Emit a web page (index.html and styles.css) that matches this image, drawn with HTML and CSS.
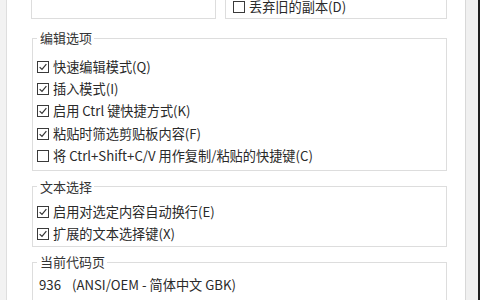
FILE: index.html
```html
<!DOCTYPE html>
<html lang="zh-CN">
<head>
<meta charset="utf-8">
<link rel="stylesheet" href="styles.css">
</head>
<body>
<div class="window">
  <div class="edge"></div>
  <main class="content">
    <div class="toprow">
      <div class="box box-left"></div>
      <div class="box box-right">
        <div class="item"><span class="cb"></span><span>丢弃旧的副本(D)</span></div>
      </div>
    </div>

    <fieldset class="group g-edit">
      <legend>编辑选项</legend>
      <div class="item"><span class="cb"><svg viewBox="0 0 11 11"><polyline points="1.8,5.6 4.4,8.2 9.2,2.4"/></svg></span><span>快速编辑模式(Q)</span></div>
      <div class="item"><span class="cb"><svg viewBox="0 0 11 11"><polyline points="1.8,5.6 4.4,8.2 9.2,2.4"/></svg></span><span>插入模式(I)</span></div>
      <div class="item"><span class="cb"><svg viewBox="0 0 11 11"><polyline points="1.8,5.6 4.4,8.2 9.2,2.4"/></svg></span><span>启用 Ctrl 键快捷方式(K)</span></div>
      <div class="item"><span class="cb"><svg viewBox="0 0 11 11"><polyline points="1.8,5.6 4.4,8.2 9.2,2.4"/></svg></span><span>粘贴时筛选剪贴板内容(F)</span></div>
      <div class="item"><span class="cb"></span><span>将 Ctrl+Shift+C/V 用作复制/粘贴的快捷键(C)</span></div>
    </fieldset>

    <fieldset class="group g-select">
      <legend>文本选择</legend>
      <div class="item"><span class="cb"><svg viewBox="0 0 11 11"><polyline points="1.8,5.6 4.4,8.2 9.2,2.4"/></svg></span><span>启用对选定内容自动换行(E)</span></div>
      <div class="item"><span class="cb"><svg viewBox="0 0 11 11"><polyline points="1.8,5.6 4.4,8.2 9.2,2.4"/></svg></span><span>扩展的文本选择键(X)</span></div>
    </fieldset>

    <fieldset class="group g-code">
      <legend>当前代码页</legend>
      <div class="codepage"><span class="num">936</span><span>(ANSI/OEM - 简体中文 GBK)</span></div>
    </fieldset>
  </main>
  <div class="scrollbar"></div>
</div>
</body>
</html>
```

FILE: styles.css
```css
html, body {
  margin: 0;
  padding: 0;
  background: #ffffff;
}

body {
  width: 480px;
  height: 300px;
  overflow: hidden;
  font-family: "Noto Sans CJK SC", "Noto Sans", sans-serif;
  font-size: 13.2px;
  color: #2a2a2a;
}

.window {
  display: flex;
  width: 480px;
  height: 300px;
  overflow: hidden;
}

.edge {
  width: 6px;
  flex: none;
  background: #f2f2f2;
  border-right: 1px solid #dedede;
}

.content {
  flex: 1;
  min-width: 0;
  padding: 0 18px 0 25px;
  background: #ffffff;
  overflow: hidden;
}

.toprow {
  display: flex;
  gap: 9px;
  margin: -16px 0 0 -1px;
  height: 35px;
}

.box {
  box-sizing: border-box;
  height: 35px;
  border: 1px solid #dddddd;
  background: #ffffff;
}

.box-left {
  width: 185px;
  flex: none;
}

.box-right {
  flex: 1;
  padding: 11px 0 0 7px;
}

.group {
  margin: 0;
  border: 1px solid #dddddd;
  padding: 0 0 0 4px;
  min-width: 0;
}

.group legend {
  padding: 0 2px 0 3px;
  margin-left: 0;
  font-size: 13px;
  line-height: 16px;
  color: #333333;
}

.g-edit {
  margin-top: 11px;
  padding-top: 10px;
  padding-bottom: 3px;
}

.g-select {
  margin-top: 8px;
  padding-top: 6px;
  padding-bottom: 1px;
}

.g-code {
  margin-top: 7px;
  padding-top: 4px;
  padding-bottom: 20px;
}

.item {
  display: flex;
  align-items: center;
  gap: 4px;
  height: 22.2px;
  line-height: 22px;
  white-space: nowrap;
}

.cb {
  box-sizing: border-box;
  width: 12px;
  height: 12px;
  flex: none;
  border: 1px solid #3a3a3a;
  background: #ffffff;
  display: flex;
}

.cb svg {
  width: 10px;
  height: 10px;
  fill: none;
  stroke: #333333;
  stroke-width: 1.3;
}

.codepage {
  display: flex;
  height: 22px;
  line-height: 22px;
  padding-left: 2px;
  white-space: nowrap;
}

.codepage .num {
  width: 33px;
}

.scrollbar {
  width: 12px;
  flex: none;
  background: #f0f0f0;
  border-left: 1px solid #d8d8d8;
  border-right: 2px solid #1e1e1e;
}
```
